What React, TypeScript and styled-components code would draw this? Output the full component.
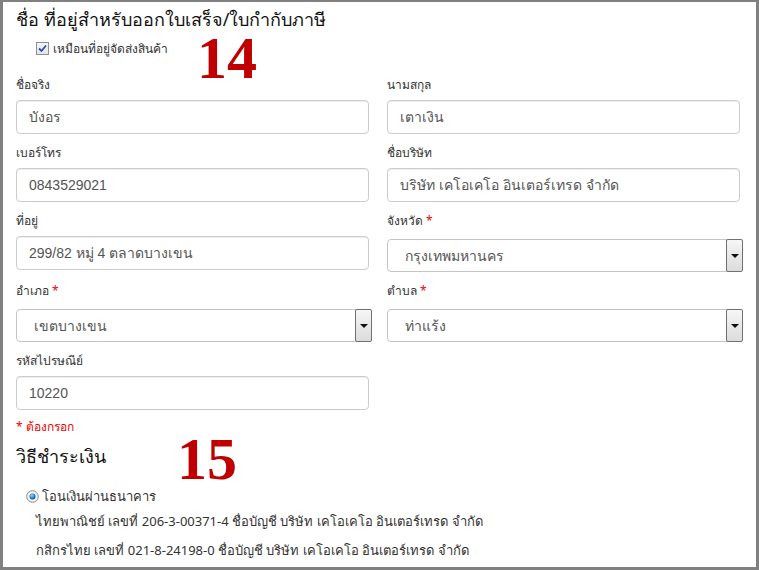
import React from 'react';
import styled, { createGlobalStyle } from 'styled-components';

const GlobalStyle = createGlobalStyle`
  html, body {
    margin: 0;
    padding: 0;
    background: #fff;
    overflow: hidden;
  }
  body {
    font-family: 'Noto Sans', 'DejaVu Sans', sans-serif;
    color: #333;
  }
`;

const Frame = styled.div`
  position: relative;
  box-sizing: border-box;
  width: 759px;
  height: 570px;
  border: 3px solid #808080;
  border-top-width: 2px;
  padding: 4px 13px 0 13px;
  overflow: hidden;
`;

const Heading = styled.h2`
  margin: 0;
  font-size: 18px;
  font-weight: normal;
  line-height: 27px;
  color: #111;
`;

const CheckRow = styled.label`
  display: flex;
  align-items: center;
  gap: 4px;
  margin: 6px 0 0 20px;
  height: 18px;
  font-size: 12px;
  color: #333;
`;

const Box = styled.span`
  display: inline-flex;
  align-items: center;
  justify-content: center;
  box-sizing: border-box;
  width: 13px;
  height: 13px;
  border: 1px solid #8e8f8f;
  background: linear-gradient(#f4f4f4, #e6e6e6);
`;

// red step numbers laid over the form
const Annotation = styled.div<{ $x: number; $y: number }>`
  position: absolute;
  left: ${(p) => p.$x}px;
  top: ${(p) => p.$y}px;
  font-family: 'Liberation Serif', 'Times New Roman', serif;
  font-weight: bold;
  font-size: 60px;
  line-height: 1;
  color: #c00000;
`;

const Grid = styled.div`
  display: grid;
  grid-template-columns: 353px 353px;
  column-gap: 18px;
  margin-top: 20px;
`;

const Field = styled.div`
  display: flex;
  flex-direction: column;
  margin-bottom: 11px;
`;

const Label = styled.div`
  height: 23px;
  font-size: 12px;
  line-height: 16px;
  color: #333;
`;

const Star = styled.span`
  color: #e00;
  margin-left: 3px;
`;

const Input = styled.input`
  box-sizing: border-box;
  width: 100%;
  height: 34px;
  padding: 0 12px;
  border: 1px solid #ccc;
  border-radius: 4px;
  box-shadow: inset 0 1px 1px rgba(0, 0, 0, 0.075);
  font-family: 'Liberation Sans', 'Noto Sans', sans-serif;
  font-size: 14px;
  color: #555;
  background: #fff;
  outline: none;
`;

const Select = styled.div`
  box-sizing: border-box;
  display: flex;
  align-items: center;
  width: calc(100% + 3px);
  height: 33px;
  margin-top: 3px;
  padding-left: 17px;
  border: 1px solid #c4c4c4;
  border-radius: 4px;
  font-size: 14px;
  color: #555;
  background: #fff;
`;

const SelectText = styled.span`
  flex: 1;
`;

const Arrow = styled.span`
  box-sizing: border-box;
  display: flex;
  align-items: center;
  justify-content: center;
  width: 17px;
  height: 33px;
  margin: 0 -1px 0 0;
  border: 1px solid #707070;
  border-radius: 2px;
  background: linear-gradient(#f6f6f6, #dcdcdc);

  &::after {
    content: '';
    border-left: 4px solid transparent;
    border-right: 4px solid transparent;
    border-top: 4px solid #111;
  }
`;

const Required = styled.div`
  margin-top: -4px;
  font-size: 12px;
  color: #e00;
`;

const Radio = styled.label`
  display: flex;
  align-items: center;
  gap: 3px;
  margin: 16px 0 0 10px;
  font-size: 13px;
  color: #333;
`;

const BankLine = styled.div`
  margin-left: 20px;
  font-size: 13px;
  line-height: 29px;
  color: #333;
`;

const PayHeading = styled(Heading)`
  margin-top: 7px;
`;

const CheckIcon = () => (
  <svg width="9" height="9" viewBox="0 0 9 9">
    <path d="M1 4.5 L3.5 7 L8 1.5" fill="none" stroke="#2a4fa8" strokeWidth="1.8" />
  </svg>
);

const RadioIcon = () => (
  <svg width="13" height="13" viewBox="0 0 13 13">
    <defs>
      <radialGradient id="dot" cx="0.4" cy="0.35" r="0.7">
        <stop offset="0" stopColor="#9fd8ff" />
        <stop offset="0.6" stopColor="#1b7fd4" />
        <stop offset="1" stopColor="#0b4d8f" />
      </radialGradient>
    </defs>
    <circle cx="6.5" cy="6.5" r="5.8" fill="#f2f2f2" stroke="#8a8a8a" />
    <circle cx="6.5" cy="6.5" r="3" fill="url(#dot)" />
  </svg>
);

type FieldDef = { label: string; value: string; required?: boolean; select?: boolean };

const fields: FieldDef[] = [
  { label: 'ชื่อจริง', value: 'บังอร' },
  { label: 'นามสกุล', value: 'เตาเงิน' },
  { label: 'เบอร์โทร', value: '0843529021' },
  { label: 'ชื่อบริษัท', value: 'บริษัท เคโอเคโอ อินเตอร์เทรด จำกัด' },
  { label: 'ที่อยู่', value: '299/82 หมู่ 4 ตลาดบางเขน' },
  { label: 'จังหวัด', value: 'กรุงเทพมหานคร', required: true, select: true },
  { label: 'อำเภอ', value: 'เขตบางเขน', required: true, select: true },
  { label: 'ตำบล', value: 'ท่าแร้ง', required: true, select: true },
  { label: 'รหัสไปรษณีย์', value: '10220' },
];

const App = () => (
  <Frame>
    <GlobalStyle />
    <Heading>ชื่อ ที่อยู่สำหรับออกใบเสร็จ/ใบกำกับภาษี</Heading>
    <CheckRow>
      <Box>
        <CheckIcon />
      </Box>
      เหมือนที่อยู่จัดส่งสินค้า
    </CheckRow>
    <Annotation $x={194} $y={26}>14</Annotation>

    <Grid>
      {fields.map((f) => (
        <Field key={f.label}>
          <Label>
            {f.label}
            {f.required && <Star>*</Star>}
          </Label>
          {f.select ? (
            <Select>
              <SelectText>{f.value}</SelectText>
              <Arrow />
            </Select>
          ) : (
            <Input readOnly value={f.value} />
          )}
        </Field>
      ))}
    </Grid>
    <Required>* ต้องกรอก</Required>

    <PayHeading>วิธีชำระเงิน</PayHeading>
    <Annotation $x={174} $y={427}>15</Annotation>
    <Radio>
      <RadioIcon />
      โอนเงินผ่านธนาคาร
    </Radio>
    <BankLine>ไทยพาณิชย์ เลขที่ 206-3-00371-4 ชื่อบัญชี บริษัท เคโอเคโอ อินเตอร์เทรด จำกัด</BankLine>
    <BankLine>กสิกรไทย เลขที่ 021-8-24198-0 ชื่อบัญชี บริษัท เคโอเคโอ อินเตอร์เทรด จำกัด</BankLine>
  </Frame>
);

export default App;
